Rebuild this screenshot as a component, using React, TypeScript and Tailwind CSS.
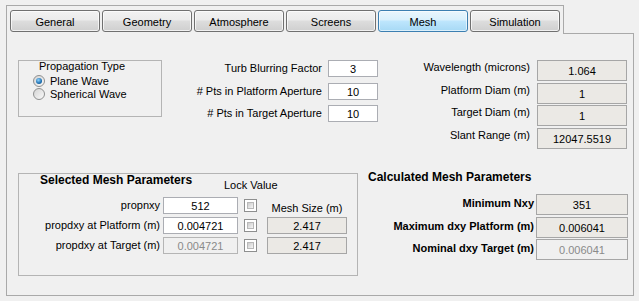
import React from 'react';

const tabs = ['General', 'Geometry', 'Atmosphere', 'Screens', 'Mesh', 'Simulation'];

function Tab({ label, active }: { label: string; active?: boolean }) {
  return (
    <div
      className={
        active
          ? 'w-[90px] h-[22px] rounded-[3px] border border-[#3c7fb1] bg-[linear-gradient(to_bottom,#eaf6fd_0%,#d9f0fc_45%,#bee6fd_50%,#a7d9f5_100%)] shadow-[inset_0_0_0_1px_rgba(255,255,255,0.6)] flex items-center justify-center pt-[2px]'
          : 'w-[90px] h-[22px] rounded-[3px] border border-[#707070] bg-[linear-gradient(to_bottom,#f2f2f2_0%,#ebebeb_45%,#dddddd_50%,#cfcfcf_100%)] shadow-[inset_0_0_0_1px_rgba(255,255,255,0.7)] flex items-center justify-center pt-[2px]'
      }
    >
      {label}
    </div>
  );
}

function Radio({ checked }: { checked?: boolean }) {
  return (
    <div className="w-[12px] h-[12px] rounded-full border border-[#8e8f8f] bg-[linear-gradient(135deg,#d4d4d4,#f9f9f9)] flex items-center justify-center">
      {checked && (
        <div className="w-[6px] h-[6px] rounded-full bg-[radial-gradient(circle_at_40%_35%,#8fd4ff,#1d6fb0_60%,#0b4a80)]" />
      )}
    </div>
  );
}

function Check() {
  return (
    <div className="w-[13px] h-[13px] border border-[#8e8f8f] bg-white p-[2px]">
      <div className="w-full h-full bg-[linear-gradient(135deg,#cbcbcb,#f6f6f6)] border border-[#b8b8b8]" />
    </div>
  );
}

function Edit({ value, w, disabled }: { value: string; w: string; disabled?: boolean }) {
  return (
    <div
      className={`${w} h-[17px] border flex items-center justify-center pt-[1px] ${
        disabled ? 'bg-[#f0f0f0] border-[#b5b5b5] text-[#8a8a8a]' : 'bg-white border-[#abadb3] text-black'
      }`}
    >
      {value}
    </div>
  );
}

function Display({ value, w, h, disabled }: { value: string; w: string; h: string; disabled?: boolean }) {
  return (
    <div
      className={`${w} ${h} border border-[#a6a6a6] flex items-center justify-center pt-[2px] ${
        disabled ? 'bg-[#f0f0f0] text-[#8a8a8a]' : 'bg-[#ebe9e5] text-black'
      }`}
    >
      {value}
    </div>
  );
}

export default function App() {
  return (
    <div className="w-[639px] h-[301px] bg-[#f0f0f0] pt-[5px] pl-[6px] overflow-hidden font-['Liberation_Sans',Arial,sans-serif] text-[11px] leading-[13px] text-black">
      <div className="w-[628px]">
        {/* tab strip */}
        <div className="flex h-[29px]">
          <div className="w-[558px] h-[29px] border-t border-l border-r border-[#a9a9a9] flex gap-[2px] pl-[3px] pt-[4px]">
            {tabs.map((t) => (
              <Tab key={t} label={t} active={t === 'Mesh'} />
            ))}
          </div>
          <div className="flex-1 border-b border-[#a9a9a9]" />
        </div>

        {/* panel body */}
        <div className="h-[262px] border-l border-r border-b border-[#a9a9a9]">
          {/* upper section */}
          <div className="flex items-start pt-[26px]">
            <div className="ml-[11px] w-[144px] h-[57px] border border-[#b4b4b4]">
              <div className="-mt-px pl-[20px] leading-[12px]">Propagation Type</div>
              <div className="mt-[3px] flex flex-col gap-[1px] pl-[14px]">
                <div className="h-[12px] flex items-center gap-[5px]">
                  <Radio checked />
                  <span>Plane Wave</span>
                </div>
                <div className="h-[12px] flex items-center gap-[5px]">
                  <Radio />
                  <span>Spherical Wave</span>
                </div>
              </div>
            </div>

            <div className="w-[216px] flex flex-col">
              <div className="flex h-[17px] items-center">
                <div className="w-[160px] text-right pb-[1px]">Turb Blurring Factor</div>
                <div className="ml-[6px]"><Edit value="3" w="w-[50px]" /></div>
              </div>
              <div className="flex h-[17px] items-center mt-[6px]">
                <div className="w-[160px] text-right pb-[1px]"># Pts in Platform Aperture</div>
                <div className="ml-[6px]"><Edit value="10" w="w-[50px]" /></div>
              </div>
              <div className="flex h-[17px] items-center mt-[5px]">
                <div className="w-[160px] text-right pb-[1px]"># Pts in Target Aperture</div>
                <div className="ml-[6px]"><Edit value="10" w="w-[50px]" /></div>
              </div>
            </div>

            <div className="flex flex-col">
              {[
                ['Wavelength (microns)', '1.064', ''],
                ['Platform Diam (m)', '1', 'mt-[2px]'],
                ['Target Diam (m)', '1', 'mt-[1px]'],
                ['Slant Range (m)', '12047.5519', 'mt-[2px]'],
              ].map(([l, v, m]) => (
                <div key={l} className={`flex items-start ${m}`}>
                  <div className="w-[152px] text-right pt-[1px]">{l}</div>
                  <div className="ml-[7px]"><Display value={v} w="w-[90px]" h="h-[21px]" /></div>
                </div>
              ))}
            </div>
          </div>

          {/* lower section */}
          <div className="flex items-start mt-[21px]">
            <div className="ml-[11px] mt-[3px] w-[340px] h-[103px] border border-[#b4b4b4] overflow-hidden">
              <div className="flex h-[23px]">
                <div className="w-[205px] pl-[21px] -mt-[1px] font-bold text-[12px] leading-[14px] whitespace-nowrap">
                  Selected Mesh Parameters
                </div>
                <div className="pt-[5px] whitespace-nowrap">Lock Value</div>
              </div>
              <div className="flex flex-col gap-[3px]">
                <div className="flex h-[17px] items-center">
                  <div className="w-[141px] text-right pb-[1px]">propnxy</div>
                  <div className="ml-[3px]"><Edit value="512" w="w-[75px]" /></div>
                  <div className="ml-[6px]"><Check /></div>
                  <div className="ml-[10px] w-[80px] text-center pt-[5px]">Mesh Size (m)</div>
                </div>
                <div className="flex h-[17px] items-center">
                  <div className="w-[141px] text-right pb-[1px]">propdxy at Platform (m)</div>
                  <div className="ml-[3px]"><Edit value="0.004721" w="w-[75px]" /></div>
                  <div className="ml-[6px]"><Check /></div>
                  <div className="ml-[10px]"><Display value="2.417" w="w-[80px]" h="h-[17px]" /></div>
                </div>
                <div className="flex h-[17px] items-center">
                  <div className="w-[141px] text-right pb-[1px]">propdxy at Target (m)</div>
                  <div className="ml-[3px]"><Edit value="0.004721" w="w-[75px]" disabled /></div>
                  <div className="ml-[6px]"><Check /></div>
                  <div className="ml-[10px]"><Display value="2.417" w="w-[80px]" h="h-[17px]" /></div>
                </div>
              </div>
            </div>

            <div className="flex flex-col">
              <div className="pl-[10px] font-bold text-[12px] leading-[14px] whitespace-nowrap">
                Calculated Mesh Parameters
              </div>
              {[
                ['Minimum Nxy', '351', 'mt-[10px]', false],
                ['Maximum dxy Platform (m)', '0.006041', 'mt-[2px]', false],
                ['Nominal dxy Target (m)', '0.006041', 'mt-[1px]', true],
              ].map(([l, v, m, d]) => (
                <div key={l as string} className={`flex items-start ${m}`}>
                  <div className="w-[176px] text-right font-bold pt-[3px] whitespace-nowrap">{l as string}</div>
                  <div className="ml-[2px]">
                    <Display value={v as string} w="w-[92px]" h="h-[21px]" disabled={d as boolean} />
                  </div>
                </div>
              ))}
            </div>
          </div>
        </div>
      </div>
    </div>
  );
}
